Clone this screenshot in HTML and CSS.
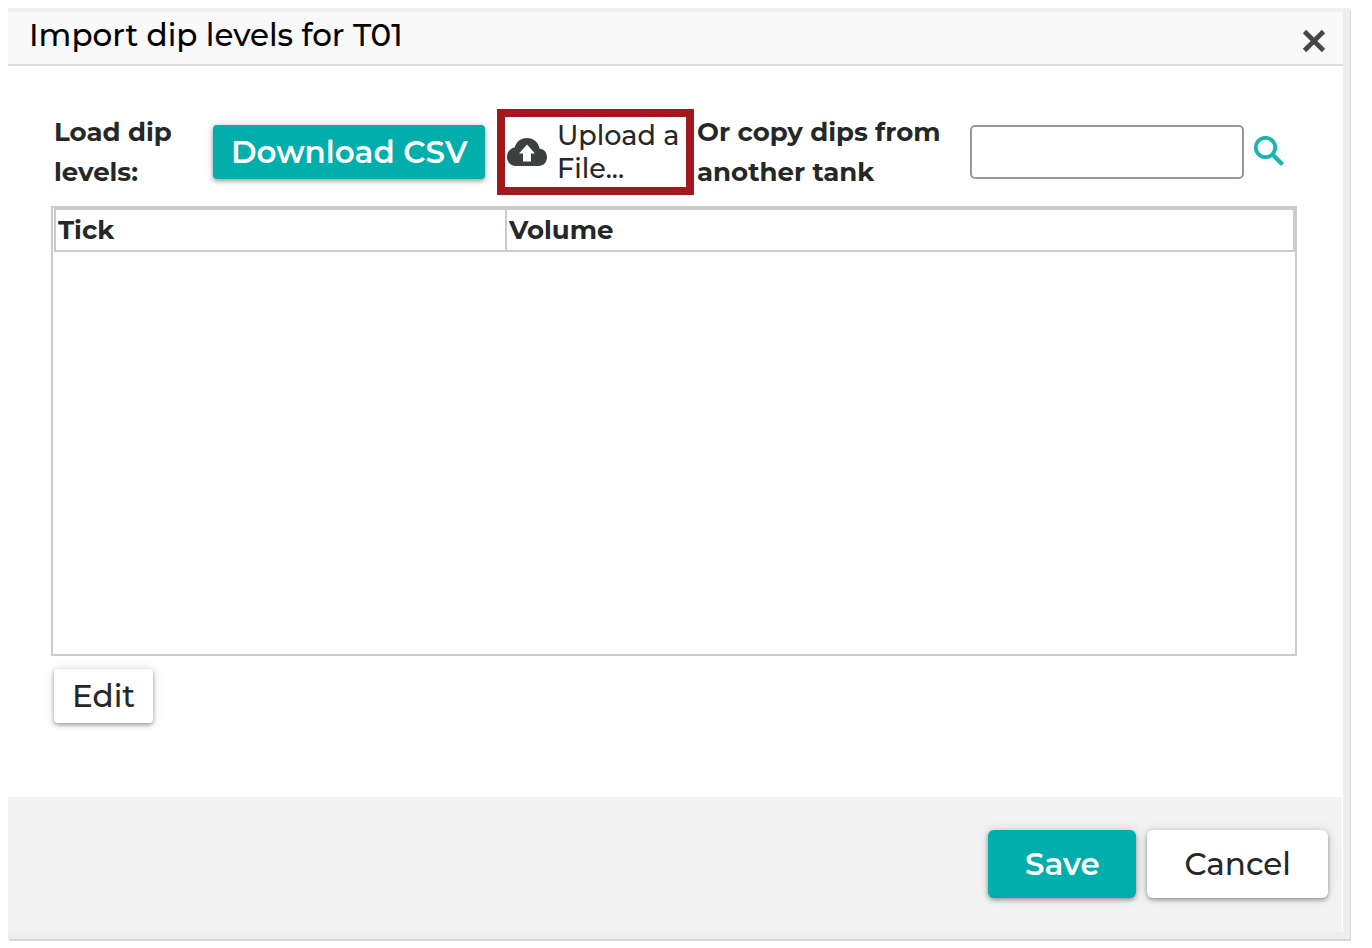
FILE: index.html
```html
<!DOCTYPE html>
<html lang="en">
<head>
<meta charset="utf-8">
<title>Import dip levels for T01</title>
<link rel="stylesheet" href="styles.css">
</head>
<body>
<main class="dialog" role="dialog" aria-labelledby="dialog-title">
  <header class="dialog-header">
    <h1 class="dialog-title" id="dialog-title">Import dip levels for T01</h1>
    <button class="icon-button" type="button" aria-label="Close">
      <svg width="24" height="24" viewBox="0 0 24 24" fill="none" stroke="#444746" stroke-width="4.6"><path d="M2.5 2.5 21.5 21.5M21.5 2.5 2.5 21.5"/></svg>
    </button>
  </header>
  <section class="dialog-body">
    <div class="toolbar">
      <span class="field-label load-label">Load dip<br>levels:</span>
      <button class="button primary" type="button">Download CSV</button>
      <button class="upload" type="button">
        <svg width="40" height="28" viewBox="0 0 40 28"><path fill="#3c4040" d="M9 28C3.500 28 0 23.800 0 18.800C0 14 3.200 10.400 7.600 9.600C9.200 3.800 13.800 0 20 0C26.500 0 31.500 4.400 32.600 10.700C37 11 40 14.500 40 19C40 24.200 36.500 28 31.500 28Z"/><path fill="#fff" d="M20 6.500 28 15.500H24V23.500H16V15.500H12Z"/></svg>
        <span>Upload a<br>File...</span>
      </button>
      <label class="field-label copy-label" for="tank">Or copy dips from<br>another tank</label>
      <input class="tank-input" id="tank" type="text">
      <button class="icon-button search" type="button" aria-label="Search tanks">
        <svg width="32" height="32" viewBox="0 0 32 32" fill="none" stroke="#1cb5b0"><circle cx="12.500" cy="11.500" r="9.700" stroke-width="3.800"/><path stroke-width="4.400" d="M19.500 18.500 29.500 28.500"/></svg>
      </button>
    </div>
    <div class="table-frame">
      <table class="levels">
        <thead><tr><th class="tick" scope="col">Tick</th><th scope="col">Volume</th></tr></thead>
      </table>
    </div>
    <button class="button" type="button">Edit</button>
  </section>
  <footer class="dialog-footer">
    <button class="button large primary" type="button">Save</button>
    <button class="button large" type="button">Cancel</button>
  </footer>
</main>
</body>
</html>
```
FILE: styles.css
```css
* { box-sizing: border-box; }

body {
  margin: 0;
  padding: 8px 22px 9px 8px;
  min-height: 100vh;
  display: flex;
  background: #fff;
  color: #262827;
  font-family: Montserrat, Inter, sans-serif;
}

button, input { font: inherit; color: inherit; }
button { cursor: pointer; }

.dialog {
  flex: 1;
  display: flex;
  flex-direction: column;
  border: solid #eee;
  border-width: 4px 7px 7px 0;
  box-shadow: 1px 2px 0 #d8d8d8;
  background: #fff;
}

.dialog-header {
  display: flex;
  align-items: center;
  justify-content: space-between;
  padding: 0 15px 6px 21px;
  height: 54px;
  background: #f9f9f9;
  border-bottom: 2px solid #ddd;
}

.dialog-title {
  margin: 0;
  color: #000;
  font-size: 31px;
  line-height: 40px;
  font-weight: 500;
}

.icon-button {
  display: flex;
  padding: 0;
  border: 0;
  background: none;
}

.dialog-header .icon-button { padding: 12px 2px 0; }

.dialog-body {
  flex: 1;
  display: flex;
  flex-direction: column;
  align-items: flex-start;
  padding: 43px 46px 74px 43px;
}

.toolbar {
  align-self: stretch;
  display: flex;
  align-items: center;
  padding-left: 3px;
}

.field-label {
  font-size: 26px;
  line-height: 40px;
  font-weight: 700;
  white-space: nowrap;
}

.load-label { width: 159px; }
.copy-label { flex: 1; padding-left: 3px; }

.button {
  min-width: 99px;
  height: 54px;
  padding: 0 18px;
  border: 0;
  border-radius: 4px;
  background: #fff;
  box-shadow: 0 2px 4px rgba(0, 0, 0, .35), 0 0 12px rgba(0, 0, 0, .12);
  font-size: 31px;
  line-height: 40px;
  font-weight: 500;
  white-space: nowrap;
}

.primary {
  background: #02aeab;
  color: #fff;
  font-weight: 600;
}

.toolbar .button { width: 272px; }

.upload {
  display: flex;
  align-items: center;
  gap: 10px;
  width: 197px;
  height: 86px;
  margin-left: 12px;
  padding: 0 2px;
  border: 8px solid #a1181f;
  background: #fff;
  font-size: 27px;
  line-height: 33px;
  font-weight: 500;
  text-align: left;
  white-space: nowrap;
}

.upload svg { flex: none; }

.tank-input {
  width: 274px;
  height: 54px;
  padding: 0 12px;
  border: 2px solid #999;
  border-radius: 5px;
  background: #fff;
  font-size: 26px;
}

.search { margin: 0 12px 0 9px; }

.table-frame {
  align-self: stretch;
  flex: 1;
  margin: 11px 0 13px;
  padding: 0 0 0 1px;
  border: 2px solid #ccc;
}

.levels {
  width: 100%;
  border-collapse: collapse;
  table-layout: fixed;
}

.levels th {
  height: 42px;
  padding: 0 2px;
  border: 2px solid #ccc;
  font-size: 26px;
  line-height: 40px;
  font-weight: 700;
  text-align: left;
}

.levels .tick { width: 451px; }
.dialog-body > .button { margin-left: 3px; }

.dialog-footer {
  display: flex;
  justify-content: flex-end;
  gap: 11px;
  margin-right: 1px;
  padding: 33px 14px 34px;
  background: #f2f2f2;
}

.large {
  min-width: 148px;
  height: 68px;
  padding: 0 37px;
  border-radius: 6px;
}

.large.primary { padding: 0 36px; }
```
